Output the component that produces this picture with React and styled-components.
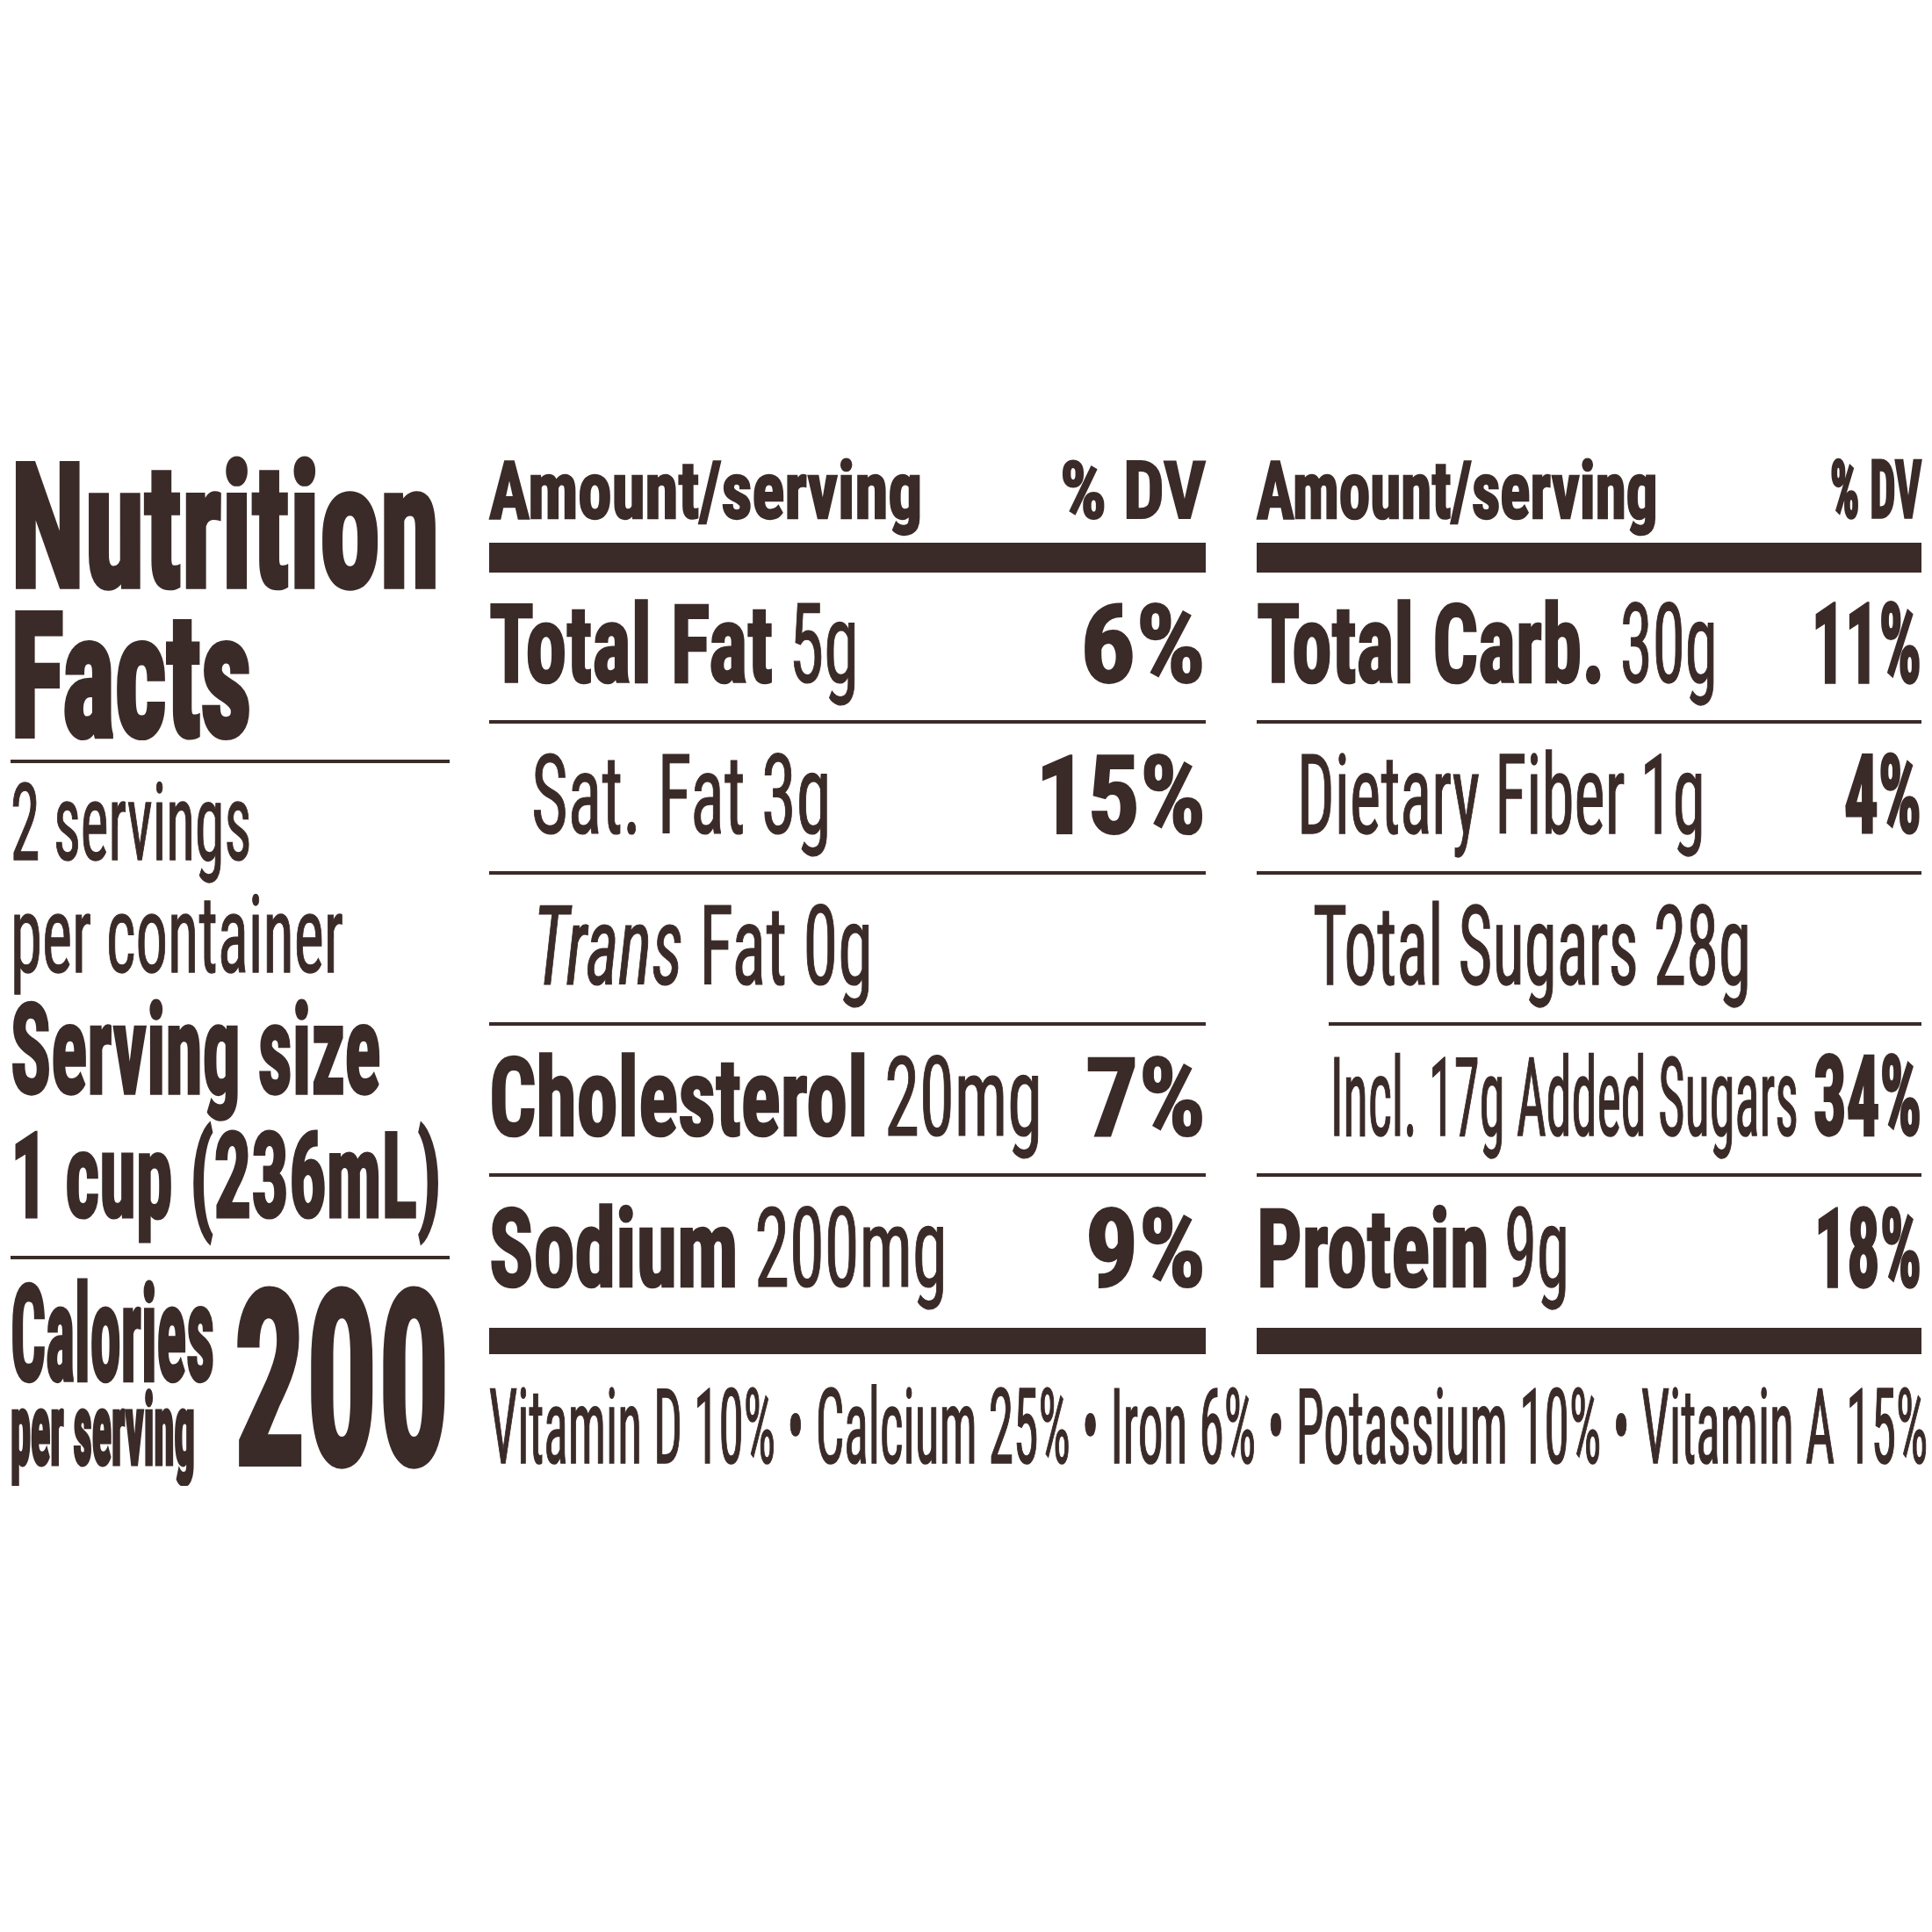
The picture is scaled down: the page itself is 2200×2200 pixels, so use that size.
import styled, { createGlobalStyle } from 'styled-components';

const INK = '#3a2b29';

const Global = createGlobalStyle`
  body {
    margin: 0;
    background: #ffffff;
    font-family: "Roboto Condensed", "Roboto", "Liberation Sans", sans-serif;
  }
`;

// whole label: left panel + nutrient panel
const Page = styled.div`
  display: flex;
  align-items: flex-start;
  padding: 505px 0 0 12px;
  color: ${INK};
`;

const LeftPanel = styled.div`
  width: 500px;
  display: flex;
  flex-direction: column;
`;

const RightPanel = styled.div`
  margin-left: 45px;
  display: flex;
  flex-direction: column;
`;

const Columns = styled.div`
  display: flex;
  gap: 58px;
`;

const Column = styled.div`
  width: ${(p) => p.$w}px;
  display: flex;
  flex-direction: column;
`;

const Row = styled.div`
  display: flex;
  justify-content: space-between;
  align-items: flex-start;
`;

// one line of type; the baseline sits $base px below its top
const Cell = styled.div`
  height: ${(p) => p.$h}px;
  padding-left: ${(p) => p.$indent || 0}px;
  font-size: 0;
  line-height: ${(p) => p.$base * 2}px;
  white-space: nowrap;
`;

// condensed type: set narrow, then stretched up from the baseline
const Txt = styled.span`
  display: inline-block;
  font-family: "Roboto Condensed", "Roboto", "Liberation Sans", sans-serif;
  font-size: ${(p) => p.$size}px;
  font-weight: ${(p) => (p.$bold ? 700 : 400)};
  font-style: ${(p) => (p.$italic ? 'italic' : 'normal')};
  line-height: 1;
  white-space: pre;
  -webkit-text-stroke: ${(p) => p.$stroke ?? (p.$bold ? 2 : 0.8)}px ${INK};
  transform: scaleY(${(p) => p.$sy});
  transform-origin: 0 84.2%;
`;

const Rule = styled.div`
  height: ${(p) => p.$h || 4}px;
  margin-left: ${(p) => p.$indent || 0}px;
  margin-top: ${(p) => p.$mt || 0}px;
  background: ${INK};
`;

const CaloriesRow = styled.div`
  display: flex;
  gap: 22px;
`;

const CaloriesStack = styled.div`
  display: flex;
  flex-direction: column;
`;

const middle = {
  width: 816,
  head: { size: 77, sy: 1.19, dv: 83, dvSy: 1.1 },
  bold: { size: 94, sy: 1.33 },
  reg: { size: 80.5, sy: 1.56 },
  rows: [
    { label: 'Total Fat', amt: ' 5g', pct: '6%', ps: 125, psy: 1.0 },
    { sub: 'Sat. Fat 3g', indent: 48, pct: '15%', ps: 117.7, psy: 1.06 },
    { em: 'Trans', sub: ' Fat 0g', indent: 50 },
    { label: 'Cholesterol', amt: ' 20mg', pct: '7%', ps: 120, psy: 1.04 },
    { label: 'Sodium', amt: ' 200mg', pct: '9%', ps: 120, psy: 1.04 },
  ],
};

const right = {
  width: 757,
  head: { size: 71.3, sy: 1.28, dv: 52, dvSy: 1.76 },
  bold: { size: 91, sy: 1.37 },
  reg: { size: 75, sy: 1.68 },
  rows: [
    { label: 'Total Carb.', amt: ' 30g', pct: '11%', ps: 76, psy: 1.65 },
    { sub: 'Dietary Fiber 1g', indent: 46, pct: '4%', ps: 77, psy: 1.62 },
    { sub: 'Total Sugars 28g', indent: 64, ruleIndent: 82 },
    { sub: 'Incl. 17g Added Sugars', indent: 84, ss: 58.4, ssy: 2.14, pct: '34%', ps: 74.6, psy: 1.68 },
    { label: 'Protein', amt: ' 9g', pct: '18%', ps: 74, psy: 1.69 },
  ],
};

function NutrientColumn({ col }) {
  const { head, bold, reg } = col;
  return (
    <Column $w={col.width}>
      <Row>
        <Cell $h={113} $base={85}>
          <Txt $bold $size={head.size} $sy={head.sy}>Amount/serving</Txt>
        </Cell>
        <Cell $h={113} $base={85}>
          <Txt $bold $size={head.dv} $sy={head.dvSy}>% DV</Txt>
        </Cell>
      </Row>
      <Rule $h={34} />
      {col.rows.map((r, i) => (
        <div key={i}>
          <Row>
            <Cell $h={168} $base={125} $indent={r.indent}>
              {r.label && (
                <Txt $bold $size={bold.size} $sy={bold.sy}>{r.label}</Txt>
              )}
              {r.amt && (
                <Txt $size={reg.size} $sy={reg.sy}>{r.amt}</Txt>
              )}
              {r.em && (
                <Txt $italic $size={reg.size} $sy={reg.sy}>{r.em}</Txt>
              )}
              {r.sub && (
                <Txt $size={r.ss || reg.size} $sy={r.ssy || reg.sy}>{r.sub}</Txt>
              )}
            </Cell>
            {r.pct && (
              <Cell $h={168} $base={125}>
                <Txt $bold $size={r.ps} $sy={r.psy}>{r.pct}</Txt>
              </Cell>
            )}
          </Row>
          {i < col.rows.length - 1 && <Rule $indent={r.ruleIndent} />}
        </div>
      ))}
      <Rule $h={30} $mt={4} />
    </Column>
  );
}

export default function App() {
  return (
    <>
      <Global />
      <Page>
        <LeftPanel>
          <Cell $h={170} $base={163}>
            <Txt $bold $stroke={4} $size={138} $sy={1.43}>Nutrition</Txt>
          </Cell>
          <Cell $h={190} $base={163}>
            <Txt $bold $stroke={4} $size={127.6} $sy={1.54}>Facts</Txt>
          </Cell>
          <Rule />
          <Cell $h={128} $base={111}>
            <Txt $size={67.7} $sy={1.81}>2 servings</Txt>
          </Cell>
          <Cell $h={128} $base={110}>
            <Txt $size={72.8} $sy={1.68}>per container</Txt>
          </Cell>
          <Cell $h={140} $base={120}>
            <Txt $bold $size={85.8} $sy={1.67}>Serving size</Txt>
          </Cell>
          <Cell $h={165} $base={122}>
            <Txt $bold $size={84.6} $sy={1.61}>1 cup (236mL)</Txt>
          </Cell>
          <Rule />
          <CaloriesRow>
            <CaloriesStack>
              <Cell $h={140} $base={138}>
                <Txt $bold $size={70.2} $sy={2.18}>Calories</Txt>
              </Cell>
              <Cell $h={116} $base={93}>
                <Txt $bold $size={46.6} $sy={2.44}>per serving</Txt>
              </Cell>
            </CaloriesStack>
            <Cell $h={256} $base={234}>
              <Txt $bold $stroke={3} $size={162.5} $sy={1.71}>200</Txt>
            </Cell>
          </CaloriesRow>
        </LeftPanel>
        <RightPanel>
          <Columns>
            <NutrientColumn col={middle} />
            <NutrientColumn col={right} />
          </Columns>
          <Cell $h={150} $base={124}>
            <Txt $size={57.4} $sy={2.06}>
              Vitamin D 10% • Calcium 25% • Iron 6% • Potassium 10% • Vitamin A 15%
            </Txt>
          </Cell>
        </RightPanel>
      </Page>
    </>
  );
}
